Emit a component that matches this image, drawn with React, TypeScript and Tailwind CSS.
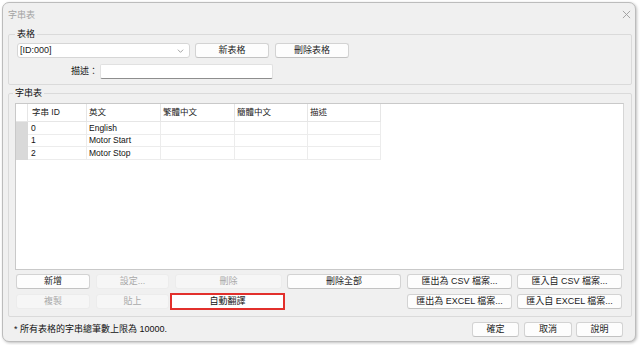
import { clsx } from "clsx";

const FONT = "font-['Liberation_Sans','Noto_Sans_CJK_TC',sans-serif]";

const COLS = [
  { label: "字串 ID", w: "w-[59px]", pad: "pl-[4px]" },
  { label: "英文", w: "w-[74px]", pad: "pl-[2px]" },
  { label: "繁體中文", w: "w-[74px]", pad: "pl-[2px]" },
  { label: "簡體中文", w: "w-[73px]", pad: "pl-[2px]" },
  { label: "描述", w: "w-[73px]", pad: "pl-[2px]" },
];

const ROWS = [
  ["0", "English", "", "", ""],
  ["1", "Motor Start", "", "", ""],
  ["2", "Motor Stop", "", "", ""],
];

function Btn({
  w,
  disabled,
  children,
}: {
  w: string;
  disabled?: boolean;
  children: React.ReactNode;
}) {
  return (
    <button
      type="button"
      className={clsx(
        "flex h-[15px] shrink-0 items-center justify-center rounded-[3px] border text-[9px] leading-none",
        w,
        disabled
          ? "border-[#ececec] bg-[#f6f6f6] text-[#a9a9a9]"
          : "border-[#d3d3d3] border-b-[#c2c2c2] bg-[#fdfdfd] text-[#1b1b1b]"
      )}
    >
      {children}
    </button>
  );
}

export default function App() {
  return (
    <div className={clsx("h-[345px] w-[640px] overflow-hidden bg-white pl-[2px] pt-[2px]", FONT)}>
      <div className="flex h-[340px] w-[634px] flex-col rounded-[7px] border border-[#bcbcbc] bg-[#f0f0f0] shadow-[1px_1px_3px_rgba(0,0,0,0.25)]">
        {/* title bar */}
        <div className="flex h-[25px] shrink-0 items-center justify-between pl-[5px] pr-[4px]">
          <span className="text-[9px] text-[#a3a3a3]">字串表</span>
          <svg viewBox="0 0 10 10" className="mb-[3px] h-[9px] w-[9px] text-[#9c9c9c]">
            <path d="M1 1L9 9M9 1L1 9" stroke="currentColor" strokeWidth="1" />
          </svg>
        </div>

        {/* 表格 group */}
        <fieldset className="ml-[5px] w-[624px] rounded-[2px] border border-[#dadada] px-[8px] pb-[5px] pt-[3px]">
          <legend className="-ml-[2px] px-[2px] text-[9px] leading-[12px] text-[#111]">表格</legend>
          <div className="flex items-center">
            <div className="flex h-[15px] w-[173px] items-center justify-between rounded-[3px] border border-[#d6d6d6] bg-white pl-[2px] pr-[5px] text-[9px] text-[#222]">
              <span>[ID:000]</span>
              <svg viewBox="0 0 10 6" className="h-[4px] w-[7px] text-[#777]">
                <path d="M1 1L5 5L9 1" fill="none" stroke="currentColor" strokeWidth="1" />
              </svg>
            </div>
            <div className="ml-[5px]">
              <Btn w="w-[74px]">新表格</Btn>
            </div>
            <div className="ml-[6px]">
              <Btn w="w-[74px]">刪除表格</Btn>
            </div>
          </div>
          <div className="mt-[6px] flex items-center">
            <span className="w-[83px] pr-[2px] text-right text-[9px] text-[#111]">描述：</span>
            <div className="h-[15px] w-[173px] rounded-[2px] border border-[#e1e1e1] border-b-[#8e8e8e] bg-white" />
          </div>
        </fieldset>

        {/* 字串表 group */}
        <fieldset className="ml-[5px] mt-[2px] w-[624px] rounded-[2px] border border-[#dadada] px-[6px] pb-[6px] pt-[4px]">
          <legend className="-ml-[2px] px-[2px] text-[9px] leading-[12px] text-[#111]">字串表</legend>

          <div className="h-[167px] w-[609px] border border-[#c9c9c9] border-r-[#d6d6d6] bg-white">
            <div className="flex h-[18px]">
              <div className="w-[12px] border-b border-r border-[#e6e6e6]" />
              {COLS.map((c) => (
                <div
                  key={c.label}
                  className={clsx(
                    "flex items-center border-b border-r border-[#e6e6e6] text-[8.5px] text-[#222]",
                    c.w,
                    c.pad
                  )}
                >
                  {c.label}
                </div>
              ))}
            </div>
            {ROWS.map((r, i) => (
              <div key={i} className="flex h-[12.5px]">
                <div className="w-[12px] bg-[#d9d9d9]" />
                {COLS.map((c, j) => (
                  <div
                    key={c.label}
                    className={clsx(
                      "flex items-center border-b border-r border-[#ececec] text-[8.5px] leading-none text-[#111]",
                      c.w,
                      j === 0 ? "pl-[3px]" : "pl-[2px]"
                    )}
                  >
                    {r[j]}
                  </div>
                ))}
              </div>
            ))}
          </div>

          <div className="mt-[4px] flex items-center pl-[1px]">
            <Btn w="w-[74px]">新增</Btn>
            <div className="ml-[6px]">
              <Btn w="w-[73px]" disabled>設定...</Btn>
            </div>
            <div className="ml-[6px]">
              <Btn w="w-[107px]" disabled>刪除</Btn>
            </div>
            <div className="ml-[5px]">
              <Btn w="w-[114px]">刪除全部</Btn>
            </div>
            <div className="ml-[6px]">
              <Btn w="w-[105px]">匯出為 CSV 檔案...</Btn>
            </div>
            <div className="ml-[5px]">
              <Btn w="w-[105px]">匯入自 CSV 檔案...</Btn>
            </div>
          </div>
          <div className="mt-[4px] flex h-[17px] items-center pl-[1px]">
            <Btn w="w-[74px]" disabled>複製</Btn>
            <div className="ml-[6px]">
              <Btn w="w-[73px]" disabled>貼上</Btn>
            </div>
            <button
              type="button"
              className="ml-[1px] flex h-[17px] w-[115px] items-center justify-center border-2 border-[#e2302c] bg-white text-[9px] leading-none text-[#111]"
            >
              自動翻譯
            </button>
            <div className="ml-[122px]">
              <Btn w="w-[105px]">匯出為 EXCEL 檔案...</Btn>
            </div>
            <div className="ml-[5px]">
              <Btn w="w-[105px]">匯入自 EXCEL 檔案...</Btn>
            </div>
          </div>
        </fieldset>

        {/* footer */}
        <div className="mt-[5px] flex items-center pl-[11px]">
          <span className="text-[9px] text-[#111]">* 所有表格的字串總筆數上限為 10000.</span>
          <div className="ml-auto mr-[12px] flex items-center">
            <Btn w="w-[47px]">確定</Btn>
            <div className="ml-[5px]">
              <Btn w="w-[48px]">取消</Btn>
            </div>
            <div className="ml-[4px]">
              <Btn w="w-[47px]">說明</Btn>
            </div>
          </div>
        </div>
      </div>
    </div>
  );
}
